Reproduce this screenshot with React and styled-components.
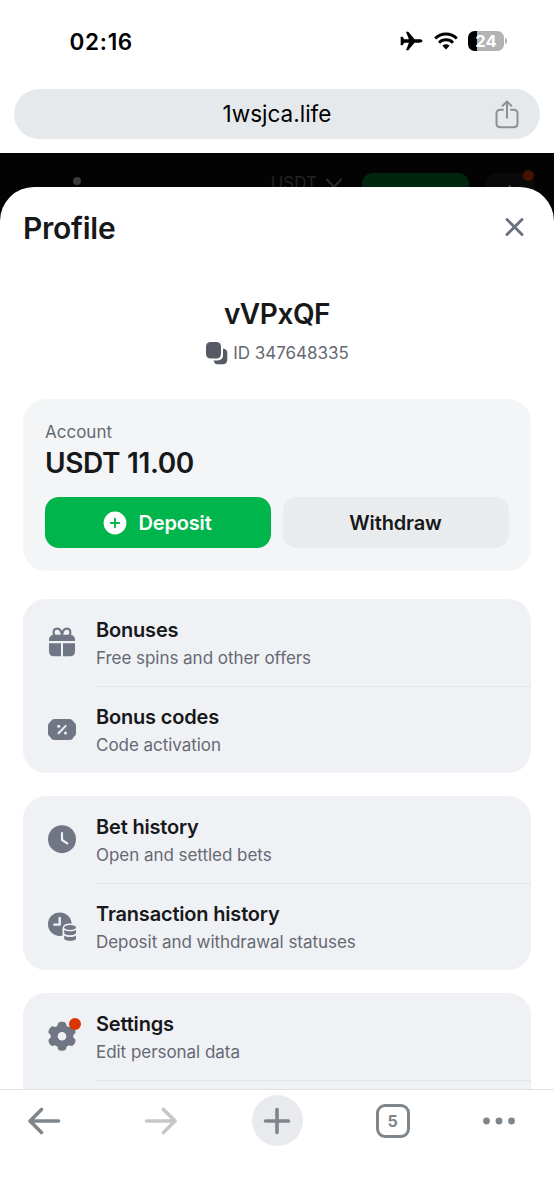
import React, { Component } from "react";
import styled, { createGlobalStyle } from "styled-components";

const color = {
  ink: "#17181a",
  gray: "#646973",
  icon: "#717684",
  chrome: "#7f868b",
  green: "#00b54b",
  red: "#dc3600",
  card: "#f3f5f7",
  list: "#f0f1f5",
};

const groups = [
  [
    { icon: "gift", title: "Bonuses", text: "Free spins and other offers" },
    { icon: "ticket", title: "Bonus codes", text: "Code activation" },
  ],
  [
    { icon: "clock", title: "Bet history", text: "Open and settled bets" },
    {
      icon: "transactions",
      title: "Transaction history",
      text: "Deposit and withdrawal statuses",
    },
  ],
  [
    { icon: "gear", title: "Settings", text: "Edit personal data", badge: true },
    { icon: "", title: "", text: "" },
  ],
];

const icons = {
  gift: (
    <g>
      <path
        d="M15.500 10.500C15 6 13.400 3.700 10.700 3.700C7.300 3.700 6 7.200 8 10.300M15.500 10.500C16 6 17.600 3.700 20.300 3.700C23.700 3.700 25 7.200 23 10.300"
        fill="none"
        stroke={color.icon}
        strokeWidth="2.200"
      />
      <path d="M2.500 16.100V15C2.500 12 4.500 9.800 7.500 9.800H23.500C26.500 9.800 28.500 12 28.500 15V16.100Z" />
      <path d="M2.500 18.200H14.500V31.300H7.500C4.200 31.300 2.500 29.500 2.500 26.300Z" />
      <path d="M16.500 18.200H28.500V26.300C28.500 29.500 26.800 31.300 23.500 31.300H16.500Z" />
    </g>
  ),
  ticket: (
    <g>
      <path d="M8 7H23C25 7 26 8 26.700 9.300C27.400 10.600 29.500 11 29.500 13.500V21.500C29.500 24 27.400 24.400 26.700 25.700C26 27 25 28 23 28H8C6 28 5 27 4.300 25.700C3.600 24.400 1.500 24 1.500 21.500V13.500C1.500 11 3.600 10.600 4.300 9.300C5 8 6 7 8 7Z" />
      <path d="M12 21.200L19.200 13.900" stroke={color.list} strokeWidth="2" strokeLinecap="round" />
      <circle cx="12.200" cy="14.300" r="1.500" fill={color.list} />
      <circle cx="19" cy="20.900" r="1.500" fill={color.list} />
    </g>
  ),
  clock: (
    <g>
      <circle cx="15.500" cy="17.200" r="14" />
      <path
        d="M15.500 11.200V18L20.800 21.400"
        fill="none"
        stroke={color.list}
        strokeWidth="2.200"
        strokeLinecap="round"
        strokeLinejoin="round"
      />
    </g>
  ),
  transactions: (
    <g>
      <circle cx="13.300" cy="15.200" r="11.800" />
      <path
        d="M13.200 9V15.600H7.800"
        fill="none"
        stroke={color.list}
        strokeWidth="2.400"
        strokeLinecap="round"
        strokeLinejoin="round"
      />
      <path d="M16 19.500Q16.200 14.500 23.500 14.500T31 19.500V32H16Z" fill={color.list} />
      <ellipse cx="23.600" cy="18.500" rx="5.900" ry="2.500" />
      <path d="M17.700 21C20.500 22.700 26.700 22.700 29.500 21V24.200C28.500 26.800 18.700 26.800 17.700 24.200Z" />
      <path d="M17.700 26.700C20.500 28.400 26.700 28.400 29.500 26.700V29.700C28.500 32.400 18.700 32.400 17.700 29.700Z" />
    </g>
  ),
  gear: (
    <g>
      <circle cx="15.500" cy="17.200" r="11.300" />
      {[0, 60, 120].map(angle => (
        <rect
          key={angle}
          x="11.100"
          y="2.700"
          width="8.800"
          height="29"
          rx="3.800"
          transform={`rotate(${angle} 15.5 17.2)`}
        />
      ))}
      <circle cx="15.500" cy="17.200" r="4.300" fill={color.list} />
    </g>
  ),
};

class ProfileRow extends Component {
  render() {
    const { icon, title, text, badge } = this.props.data;
    return (
      <Row>
        <RowIcon>
          <svg width="31" height="34" viewBox="-.5 0 31 34" fill={color.icon}>
            {icons[icon]}
          </svg>
          {badge && <Badge />}
        </RowIcon>
        <RowBody>
          <RowTitle>{title}</RowTitle>
          <RowText>{text}</RowText>
        </RowBody>
      </Row>
    );
  }
}

class App extends Component {
  render() {
    return (
      <Screen>
        <GlobalStyle />
        <StatusBar>
          <Time>02:16</Time>
          <StatusIcons>
            <svg width="23" height="20" viewBox="0 0 23 20">
              <path d="M22.500 10C22.500 11.300 20.500 11.700 19 11.700H14.500L8.300 19.300H6L8.900 11.700H4.300L2.500 14.300H.700V5.700H2.500L4.300 8.300H8.900L6 .700H8.300L14.500 8.300H19C20.500 8.300 22.500 8.700 22.500 10Z" />
            </svg>
            <svg width="24" height="18" viewBox="0 0 24 18">
              <g fill="none" stroke="#000" strokeWidth="2.900">
                <path d="M1.200 6.500A15.300 15.300 0 0 1 22.800 6.500" />
                <path d="M5 10.700A9.900 9.900 0 0 1 19 10.700" />
              </g>
              <path d="M8.400 13.800A5.100 5.100 0 0 1 15.600 13.800L12 17.500Z" />
            </svg>
            <Battery>
              <BatteryBody>24</BatteryBody>
              <BatteryTip />
            </Battery>
          </StatusIcons>
        </StatusBar>

        <AddressRow>
          <AddressBar>
            <span />
            <Url>1wsjca.life</Url>
            <svg
              width="24"
              height="30"
              viewBox="0 -2 24 30"
              fill="none"
              stroke="#8b9196"
              strokeWidth="2"
              strokeLinecap="round"
              strokeLinejoin="round"
            >
              <path d="M8 8.800H5.500C2.800 8.800 1.500 10.100 1.500 12.500V22.500C1.500 25 2.800 26.200 5.500 26.200H18.500C21.200 26.200 22.500 25 22.500 22.500V12.500C22.500 10.100 21.200 8.800 18.500 8.800H16" />
              <path d="M12 16.800V.700M7.700 4.700L12 .500L16.300 4.700" />
            </svg>
          </AddressBar>
        </AddressRow>

        <Page>
          <Site>
            <SiteDot />
            <SiteCurrency>USDT</SiteCurrency>
            <svg width="18" height="12" viewBox="0 0 18 12" fill="none" stroke="#2a2b2d" strokeWidth="2">
              <path d="M2 1.500L9 9L16 1.500" strokeLinecap="round" />
            </svg>
            <SiteDeposit />
            <SiteUser>
              <svg width="10" height="10" viewBox="0 0 10 10" fill="#4a4a4c">
                <path d="M3.700 .800L.200 5H7.200Z" />
              </svg>
              <SiteBadge />
            </SiteUser>
          </Site>

          <Sheet>
            <SheetHeader>
              <SheetTitle>Profile</SheetTitle>
              <svg width="20" height="20" viewBox="0 0 20 20" stroke="#6b7080" strokeWidth="2.900" strokeLinecap="round">
                <path d="M3 2.500L18 17.500M18 2.500L3 17.500" />
              </svg>
            </SheetHeader>

            <UserName>vVPxQF</UserName>
            <UserId>
              <svg width="24" height="24" viewBox="0 0 24 24" fill="#555a65">
                <rect x="1" y="1" width="15" height="16.500" rx="4.500" />
                <path d="M18 7.600C21 7.800 22.300 9.500 22.300 12.300V18C22.300 21.500 20.800 23.300 17.300 23.300H13.500C10.700 23.300 9 22.300 8.700 19.400H12.500C16 19.400 18 17.300 18 14Z" />
              </svg>
              <span>ID 347648335</span>
            </UserId>

            <AccountCard>
              <AccountLabel>Account</AccountLabel>
              <AccountSum>USDT 11.00</AccountSum>
              <AccountButtons>
                <AccountButton $primary>
                  <svg width="24" height="24" viewBox="0 0 24 24">
                    <circle cx="12" cy="12" r="11.400" fill="#fff" />
                    <path d="M12 7.800V16.200M7.800 12H16.200" stroke={color.green} strokeWidth="1.900" strokeLinecap="round" />
                  </svg>
                  Deposit
                </AccountButton>
                <AccountButton>Withdraw</AccountButton>
              </AccountButtons>
            </AccountCard>

            {groups.map((rows, i) => (
              <Group key={i}>
                {rows.map((row, j) => (
                  <ProfileRow key={j} data={row} />
                ))}
              </Group>
            ))}
          </Sheet>
        </Page>

        <Toolbar>
          <ToolButton>
            <svg width="34" height="28" viewBox="0 0 34 28" {...stroke(color.chrome)}>
              <path d="M31.500 14H3M14.500 2.500L3 14L14.500 25.500" />
            </svg>
          </ToolButton>
          <ToolButton>
            <svg width="34" height="28" viewBox="0 0 34 28" {...stroke("#c6c7c8")}>
              <path d="M2.500 14H31M19.500 2.500L31 14L19.500 25.500" />
            </svg>
          </ToolButton>
          <ToolButton $round>
            <svg width="28" height="28" viewBox="0 0 28 28" {...stroke(color.chrome)}>
              <path d="M14 2.500V25.500M2.500 14H25.500" />
            </svg>
          </ToolButton>
          <ToolButton>
            <TabCount>5</TabCount>
          </ToolButton>
          <ToolButton>
            <svg width="34" height="8" viewBox="0 0 34 8" fill={color.chrome}>
              <circle cx="4.500" cy="4" r="3.400" />
              <circle cx="17" cy="4" r="3.400" />
              <circle cx="29.500" cy="4" r="3.400" />
            </svg>
          </ToolButton>
        </Toolbar>
      </Screen>
    );
  }
}
export default App;

function stroke(value) {
  return {
    fill: "none",
    stroke: value,
    strokeWidth: 3.6,
    strokeLinecap: "round",
    strokeLinejoin: "round",
  };
}

const GlobalStyle = createGlobalStyle`
  * {
    box-sizing: border-box;
  }
  body {
    margin: 0;
    background: #fff;
    font-family: Inter, "Liberation Sans", sans-serif;
    -webkit-font-smoothing: antialiased;
  }
  svg {
    display: block;
    flex: none;
  }
`;

const Screen = styled.div`
  display: flex;
  flex-direction: column;
  width: 554px;
  height: 1200px;
  overflow: hidden;
  background: #fff;
`;

const StatusBar = styled.div`
  display: flex;
  flex: none;
  justify-content: space-between;
  height: 89px;
  padding: 27px 47px 0 69.5px;
`;

const Time = styled.div`
  font-size: 22.5px;
  font-weight: 600;
  line-height: 29px;
  letter-spacing: 0.7px;
`;

const StatusIcons = styled.div`
  display: flex;
  align-items: center;
  gap: 10.5px;
  height: 28px;
`;

const Battery = styled.div`
  display: flex;
  align-items: center;
  gap: 1px;
`;

const BatteryBody = styled.div`
  width: 36px;
  height: 20px;
  border-radius: 6.5px;
  background: linear-gradient(90deg, #000 9px, #b3b3b3 9px);
  color: #fff;
  font-size: 16.5px;
  font-weight: 700;
  line-height: 20px;
  text-align: center;
`;

const BatteryTip = styled.div`
  width: 2px;
  height: 6px;
  border-radius: 0 2px 2px 0;
  background: #b3b3b3;
`;

const AddressRow = styled.div`
  flex: none;
  height: 64px;
  padding: 0 14px;
`;

const AddressBar = styled.div`
  display: grid;
  grid-template-columns: 24px 1fr 24px;
  align-items: center;
  height: 50px;
  padding: 0 21px;
  border-radius: 25px;
  background: #e5e9ec;
`;

const Url = styled.div`
  font-size: 22.5px;
  line-height: 50px;
  text-align: center;
`;

const Page = styled.div`
  display: flex;
  flex: 1;
  flex-direction: column;
  min-height: 0;
  overflow: hidden;
  background: #030303;
`;

const Site = styled.div`
  display: flex;
  flex: none;
  align-items: flex-start;
  height: 34px;
  padding: 20px 19px 0 73px;

  & > svg {
    margin: 5px 19px 0 8px;
  }
`;

const SiteDot = styled.div`
  width: 8px;
  height: 8px;
  margin: 4px auto 0 0;
  border-radius: 50%;
  background: #3a3a3b;
`;

const SiteCurrency = styled.div`
  color: #222325;
  font-size: 17px;
  line-height: 20px;
`;

const SiteDeposit = styled.div`
  width: 107px;
  height: 40px;
  margin-right: 17px;
  border-radius: 11px;
  background: #00260f;
`;

const SiteUser = styled.div`
  position: relative;
  display: flex;
  justify-content: center;
  width: 49px;
  height: 40px;
  padding-top: 11px;
  border-radius: 11px;
  background: #0a0a0b;
`;

const SiteBadge = styled.div`
  position: absolute;
  top: -3px;
  right: 1px;
  width: 11px;
  height: 11px;
  border-radius: 50%;
  background: #431200;
`;

const Sheet = styled.div`
  position: relative;
  flex: 1;
  min-height: 0;
  padding: 0 23px;
  overflow: hidden;
  border-radius: 34px 34px 0 0;
  background: #fff;
`;

const SheetHeader = styled.div`
  display: flex;
  align-items: center;
  justify-content: space-between;
  height: 80px;
  padding-right: 7px;
`;

const SheetTitle = styled.div`
  color: ${color.ink};
  font-size: 30px;
  font-weight: 600;
  line-height: 36px;
  letter-spacing: -0.25px;
  padding-top: 2px;
`;

const UserName = styled.div`
  margin-top: 28px;
  color: ${color.ink};
  font-size: 28px;
  font-weight: 600;
  line-height: 38px;
  letter-spacing: -0.45px;
  text-align: center;
`;

const UserId = styled.div`
  display: flex;
  align-items: center;
  justify-content: center;
  gap: 4px;
  height: 40px;
  color: ${color.gray};
  font-size: 17px;
  letter-spacing: -0.02px;
`;

const AccountCard = styled.div`
  height: 172px;
  margin: 26px 0 28px;
  padding: 22px 22px 0;
  border-radius: 23px;
  background: ${color.card};
`;

const AccountLabel = styled.div`
  color: ${color.gray};
  font-size: 17px;
  line-height: 22px;
`;

const AccountSum = styled.div`
  padding-top: 1px;
  color: ${color.ink};
  font-size: 28px;
  font-weight: 600;
  line-height: 38px;
  letter-spacing: -0.35px;
`;

const AccountButtons = styled.div`
  display: grid;
  grid-template-columns: 1fr 1fr;
  gap: 12px;
  margin-top: 15px;
`;

const AccountButton = styled.div`
  display: flex;
  align-items: center;
  justify-content: center;
  gap: 11px;
  height: 51px;
  padding-right: 1px;
  border-radius: 14px;
  background: ${props => (props.$primary ? color.green : "#eaebed")};
  color: ${props => (props.$primary ? "#fff" : color.ink)};
  font-size: 20px;
  font-weight: 600;
  letter-spacing: -0.15px;
`;

const Group = styled.div`
  height: 174px;
  margin-bottom: 23px;
  border-radius: 23px;
  background: ${color.list};
`;

const RowBody = styled.div`
  flex: 1;
  height: 88px;
  padding-top: 18px;
`;

const Row = styled.div`
  display: flex;
  height: 87px;

  &:not(:last-child) ${RowBody} {
    border-bottom: 1px solid #e4e5e9;
  }
`;

const RowIcon = styled.div`
  position: relative;
  width: 73px;
  padding: 26px 0 0 23px;
`;

const Badge = styled.div`
  position: absolute;
  top: 25px;
  left: 46px;
  width: 12px;
  height: 12px;
  border-radius: 50%;
  background: ${color.red};
`;

const RowTitle = styled.div`
  color: ${color.ink};
  font-size: 20px;
  font-weight: 600;
  line-height: 26px;
  letter-spacing: -0.18px;
`;

const RowText = styled.div`
  padding-top: 3px;
  color: ${color.gray};
  font-size: 17px;
  line-height: 24px;
  letter-spacing: -0.04px;
`;

const Toolbar = styled.div`
  display: grid;
  flex: none;
  grid-template-columns: 88px 145px 88px 143px 70px;
  height: 111px;
  padding-top: 5px;
  border-top: 1px solid #dfe1e5;
  background: #fff;
`;

const ToolButton = styled.div`
  display: flex;
  align-items: center;
  justify-content: center;
  justify-self: center;
  width: 51px;
  height: 51px;
  border-radius: 50%;
  background: ${props => (props.$round ? "#e8eaed" : "transparent")};
`;

const TabCount = styled.div`
  width: 34px;
  height: 34px;
  border: 3px solid ${color.chrome};
  border-radius: 9px;
  color: ${color.chrome};
  font-size: 16px;
  font-weight: 700;
  line-height: 29px;
  text-align: center;
`;
